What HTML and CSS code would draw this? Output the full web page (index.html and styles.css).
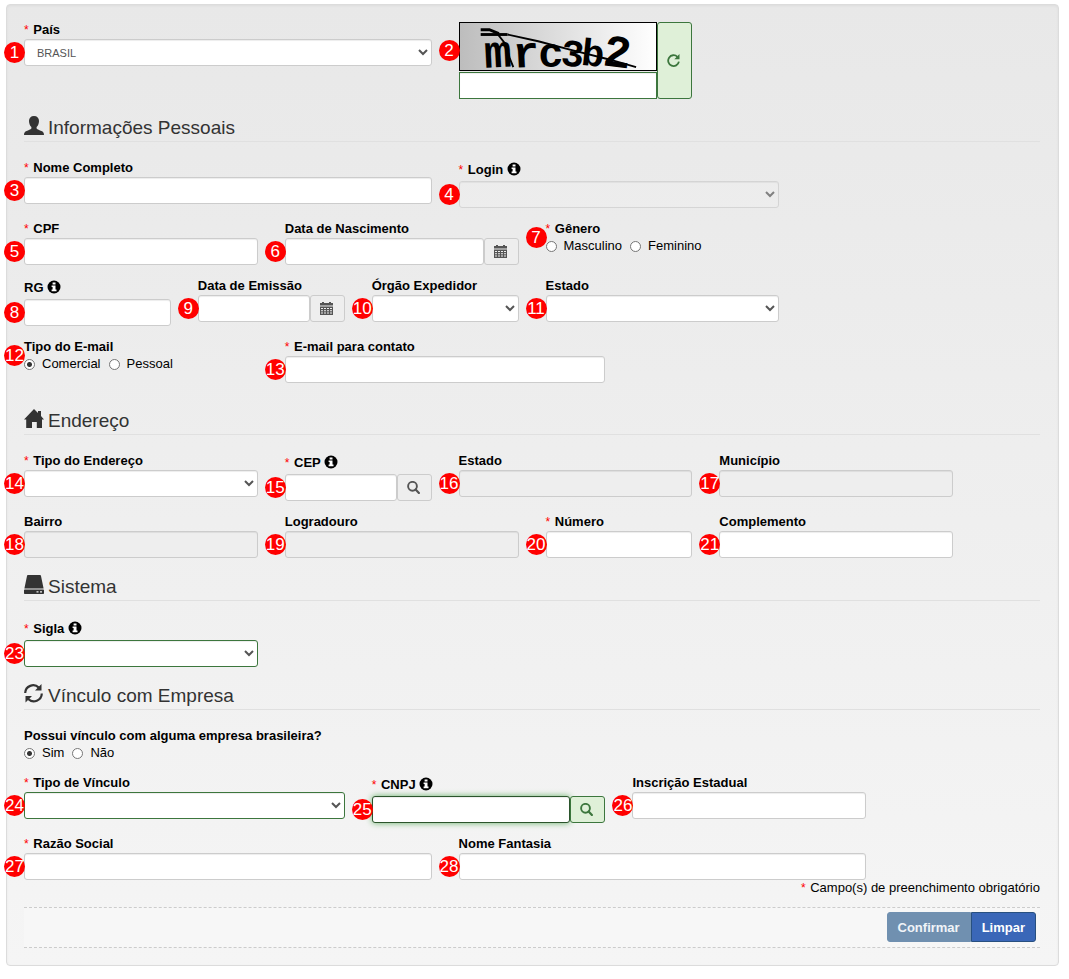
FILE: index.html
```html
<!DOCTYPE html>
<html lang="pt-BR">
  <head>
    <meta charset="UTF-8" />
    <meta name="viewport" content="width=device-width, initial-scale=1" />
    <title>Cadastro</title>
    <link rel="stylesheet" href="styles.css">
  </head>
  <body>
    <svg class="sprite" aria-hidden="true">
      <symbol id="icon-user" viewBox="0 0 20 20">
        <path d="M10 0c3.200 0 5 2 5 5 0 2.600-1 4.800-2.400 6v1.600c.8 1 3 1.700 4.800 2.500 1.800.7 2.600 1.900 2.600 3.900H0c0-2 .8-3.200 2.600-3.900 1.800-.8 4-1.500 4.800-2.500V11C6 9.800 5 7.600 5 5c0-3 1.800-5 5-5z" />
      </symbol>
      <symbol id="icon-home" viewBox="0 0 20 20">
        <path d="M10 0l4 4V2h3v5l3 3.400h-2V19h-5.200v-6H8v6H2.200v-8.600H0z" />
      </symbol>
      <symbol id="icon-hdd" viewBox="0 0 20 20">
        <path fill-rule="evenodd" d="M4.200 0h11.600c.7 0 1 .3 1.200 1l2.600 12.600H.4L3 1c.2-.7.500-1 1.200-1zM1 14.600h18c.6 0 1 .4 1 1v2.400c0 .6-.4 1-1 1H1c-.6 0-1-.4-1-1v-2.400c0-.6.400-1 1-1zm11.500 1.600v1.300h2v-1.300zm3.500 0v1.300h2v-1.300z" />
      </symbol>
      <symbol id="icon-sync" viewBox="0 0 20 20">
        <path d="M1.200 9A8 8 0 0 1 14.800 3.600M17.800 9.500A8 8 0 0 1 4.200 15" fill="none" stroke="currentColor" stroke-width="2.200" />
        <path d="M17.500 0v6.500H11zM1.500 18.500V12H8z" />
      </symbol>
      <symbol id="icon-info" viewBox="0 0 14 14">
        <circle cx="7" cy="7" r="6.500" />
        <path d="M5.600 2.400h2.900v2H5.600zM4.600 5.400h3.900v4.200h1v1.700H4.600V9.600h1V7.100h-1z" fill="#fff" />
      </symbol>
      <symbol id="icon-calendar" viewBox="0 0 13 13">
        <path fill-rule="evenodd" d="M0 1h2V0h2v1h5V0h2v1h2v2.500H0zM0 4.500h13V13H0zM1 6v1h2V6zm3 0v1h2V6zm3 0v1h2V6zm3 0v1h2V6zM1 8.300v1h2v-1zm3 0v1h2v-1zm3 0v1h2v-1zm3 0v1h2v-1zM1 10.600v1h2v-1zm3 0v1h2v-1zm3 0v1h2v-1zm3 0v1h2v-1z" />
      </symbol>
      <symbol id="icon-search" viewBox="0 0 13 13">
        <circle cx="5.500" cy="5.300" r="4.400" fill="none" stroke="currentColor" stroke-width="1.900" />
        <path d="M8.600 8.500l3.300 3.500" stroke="currentColor" stroke-width="2.200" stroke-linecap="round" />
      </symbol>
      <symbol id="icon-repeat" viewBox="0 0 13 13">
        <path d="M10.400 2.800A5.400 5.400 0 1 0 11.900 7.600" fill="none" stroke="currentColor" stroke-width="1.800" />
        <path d="M12.500 0v5.200H7.300z" />
      </symbol>
    </svg>

    <form class="well">
      <div class="row">
        <div class="field col-5">
          <label for="pais"><span class="req">*</span> País</label>
          <div class="control">
            <select id="pais"><option>BRASIL</option></select>
            <span class="badge">1</span>
          </div>
        </div>
        <div class="field col-3">
          <div class="control captcha">
            <div class="captcha-main">
              <svg class="captcha-image" viewBox="0 0 198 49" role="img" aria-label="Captcha">
                <g class="captcha-text">
                  <text x="22" y="46" font-size="48" transform="rotate(-3 36 40)">m</text>
                  <text x="52" y="46" font-size="46" transform="rotate(-3 66 40)">r</text>
                  <text x="78" y="46" font-size="44">c</text>
                  <text x="102" y="45" font-size="40" transform="rotate(6 114 32)">3</text>
                  <text x="123" y="45" font-size="40" transform="rotate(6 136 32)">b</text>
                  <text x="146" y="46" font-size="48" transform="rotate(7 160 32)">2</text>
                </g>
                <path d="M18 7h9l10 4" fill="none" stroke="#000" stroke-width="3" />
                <path d="M18 12h28" stroke="#000" stroke-width="3" />
                <path d="M46 12l32 7 34 9 40 10 28 8M36 12l8 10 4 14 4 10" fill="none" stroke="#000" stroke-width="2" />
              </svg>
              <input type="text" id="captcha" class="success" aria-label="Captcha" />
            </div>
            <button type="button" class="addon success" aria-label="Atualizar captcha">
              <svg class="icon"><use href="#icon-repeat" /></svg>
            </button>
            <span class="badge">2</span>
          </div>
        </div>
      </div>

      <h2><svg class="icon"><use href="#icon-user" /></svg> Informações Pessoais</h2>
      <div class="row">
        <div class="field col-5">
          <label for="nome"><span class="req">*</span> Nome Completo</label>
          <div class="control">
            <input type="text" id="nome" />
            <span class="badge">3</span>
          </div>
        </div>
        <div class="field col-4">
          <label for="login" class="with-info"><span class="req">*</span> Login <svg class="icon"><use href="#icon-info" /></svg></label>
          <div class="control">
            <select id="login" disabled></select>
            <span class="badge">4</span>
          </div>
        </div>
      </div>
      <div class="row">
        <div class="field col-3">
          <label for="cpf"><span class="req">*</span> CPF</label>
          <div class="control">
            <input type="text" id="cpf" />
            <span class="badge">5</span>
          </div>
        </div>
        <div class="field col-3">
          <label for="nascimento">Data de Nascimento</label>
          <div class="control">
            <input type="text" id="nascimento" />
            <button type="button" class="addon" aria-label="Calendário">
              <svg class="icon"><use href="#icon-calendar" /></svg>
            </button>
            <span class="badge">6</span>
          </div>
        </div>
        <fieldset class="field col-3">
          <legend><span class="req">*</span> Gênero</legend>
          <div class="control radios">
            <label><input type="radio" name="genero" /> Masculino</label>
            <label><input type="radio" name="genero" /> Feminino</label>
            <span class="badge">7</span>
          </div>
        </fieldset>
      </div>
      <div class="row">
        <div class="field col-2">
          <label for="rg" class="with-info">RG <svg class="icon"><use href="#icon-info" /></svg></label>
          <div class="control">
            <input type="text" id="rg" />
            <span class="badge">8</span>
          </div>
        </div>
        <div class="field col-2">
          <label for="emissao">Data de Emissão</label>
          <div class="control">
            <input type="text" id="emissao" />
            <button type="button" class="addon" aria-label="Calendário">
              <svg class="icon"><use href="#icon-calendar" /></svg>
            </button>
            <span class="badge">9</span>
          </div>
        </div>
        <div class="field col-2">
          <label for="orgao">Órgão Expedidor</label>
          <div class="control">
            <select id="orgao"></select>
            <span class="badge">10</span>
          </div>
        </div>
        <div class="field col-3">
          <label for="estadoRg">Estado</label>
          <div class="control">
            <select id="estadoRg"></select>
            <span class="badge">11</span>
          </div>
        </div>
      </div>
      <div class="row row-last">
        <fieldset class="field col-3">
          <legend>Tipo do E-mail</legend>
          <div class="control radios">
            <label><input type="radio" name="tipoEmail" checked /> Comercial</label>
            <label><input type="radio" name="tipoEmail" /> Pessoal</label>
            <span class="badge">12</span>
          </div>
        </fieldset>
        <div class="field col-4">
          <label for="email"><span class="req">*</span> E-mail para contato</label>
          <div class="control">
            <input type="email" id="email" />
            <span class="badge">13</span>
          </div>
        </div>
      </div>

      <h2><svg class="icon"><use href="#icon-home" /></svg> Endereço</h2>
      <div class="row">
        <div class="field col-3">
          <label for="tipoEndereco"><span class="req">*</span> Tipo do Endereço</label>
          <div class="control">
            <select id="tipoEndereco"></select>
            <span class="badge">14</span>
          </div>
        </div>
        <div class="field col-2">
          <label for="cep" class="with-info"><span class="req">*</span> CEP <svg class="icon"><use href="#icon-info" /></svg></label>
          <div class="control">
            <input type="text" id="cep" />
            <button type="button" class="addon" aria-label="Buscar CEP">
              <svg class="icon"><use href="#icon-search" /></svg>
            </button>
            <span class="badge">15</span>
          </div>
        </div>
        <div class="field col-3">
          <label for="estado">Estado</label>
          <div class="control">
            <input type="text" id="estado" disabled />
            <span class="badge">16</span>
          </div>
        </div>
        <div class="field col-3">
          <label for="municipio">Município</label>
          <div class="control">
            <input type="text" id="municipio" disabled />
            <span class="badge">17</span>
          </div>
        </div>
      </div>
      <div class="row">
        <div class="field col-3">
          <label for="bairro">Bairro</label>
          <div class="control">
            <input type="text" id="bairro" disabled />
            <span class="badge">18</span>
          </div>
        </div>
        <div class="field col-3">
          <label for="logradouro">Logradouro</label>
          <div class="control">
            <input type="text" id="logradouro" disabled />
            <span class="badge">19</span>
          </div>
        </div>
        <div class="field col-2">
          <label for="numero"><span class="req">*</span> Número</label>
          <div class="control">
            <input type="text" id="numero" />
            <span class="badge">20</span>
          </div>
        </div>
        <div class="field col-3">
          <label for="complemento">Complemento</label>
          <div class="control">
            <input type="text" id="complemento" />
            <span class="badge">21</span>
          </div>
        </div>
      </div>

      <h2><svg class="icon"><use href="#icon-hdd" /></svg> Sistema</h2>
      <div class="row">
        <div class="field col-3">
          <label for="sigla" class="with-info"><span class="req">*</span> Sigla <svg class="icon"><use href="#icon-info" /></svg></label>
          <div class="control">
            <select id="sigla" class="success"></select>
            <span class="badge">23</span>
          </div>
        </div>
      </div>

      <h2><svg class="icon"><use href="#icon-sync" /></svg> Vínculo com Empresa</h2>
      <div class="row">
        <fieldset class="field col-5">
          <legend>Possui vínculo com alguma empresa brasileira?</legend>
          <div class="control radios">
            <label><input type="radio" name="vinculo" checked /> Sim</label>
            <label><input type="radio" name="vinculo" /> Não</label>
          </div>
        </fieldset>
      </div>
      <div class="row">
        <div class="field col-4">
          <label for="tipoVinculo"><span class="req">*</span> Tipo de Vínculo</label>
          <div class="control">
            <select id="tipoVinculo" class="success"></select>
            <span class="badge">24</span>
          </div>
        </div>
        <div class="field col-3">
          <label for="cnpj" class="with-info"><span class="req">*</span> CNPJ <svg class="icon"><use href="#icon-info" /></svg></label>
          <div class="control">
            <input type="text" id="cnpj" class="success active" />
            <button type="button" class="addon success" aria-label="Buscar CNPJ">
              <svg class="icon"><use href="#icon-search" /></svg>
            </button>
            <span class="badge">25</span>
          </div>
        </div>
        <div class="field col-3">
          <label for="inscricao">Inscrição Estadual</label>
          <div class="control">
            <input type="text" id="inscricao" />
            <span class="badge">26</span>
          </div>
        </div>
      </div>
      <div class="row row-end">
        <div class="field col-5">
          <label for="razao"><span class="req">*</span> Razão Social</label>
          <div class="control">
            <input type="text" id="razao" />
            <span class="badge">27</span>
          </div>
        </div>
        <div class="field col-5">
          <label for="fantasia">Nome Fantasia</label>
          <div class="control">
            <input type="text" id="fantasia" />
            <span class="badge">28</span>
          </div>
        </div>
      </div>

      <p class="note"><span class="req">*</span> Campo(s) de preenchimento obrigatório</p>
      <div class="actions">
        <button type="submit" class="btn" disabled>Confirmar</button>
        <button type="reset" class="btn">Limpar</button>
      </div>
    </form>
  </body>
</html>
```
FILE: styles.css
```css
* {
  box-sizing: border-box;
}
body {
  margin: 0;
  padding: 4px 10px 14px 6px;
  background: #fff;
  color: #000;
  font-family: "Liberation Sans", Arial, sans-serif;
  font-size: 13px;
  line-height: 15px;
}
.sprite {
  display: none;
}
.icon {
  width: 13px;
  height: 13px;
  fill: currentColor;
}
.well {
  padding: 17px 18px 17px 17px;
  border: 1px solid #dcdcdc;
  border-radius: 4px;
  background: linear-gradient(#e8e8e8, #f5f5f5);
  box-shadow: inset 0 1px 3px rgba(0, 0, 0, 0.05);
}

/* headings */
h2 {
  display: flex;
  align-items: flex-start;
  gap: 4px;
  margin: 0 0 18px;
  padding-top: 3px;
  border-bottom: 1px solid #e0e0e0;
  color: #333;
  font-size: 19px;
  font-weight: normal;
  line-height: 26px;
}
h2 .icon {
  width: 20px;
  height: 20px;
  margin-top: 1px;
}

/* grid */
.row {
  display: grid;
  grid-template-columns: repeat(12, 1fr);
  column-gap: 27px;
  align-items: start;
  margin-bottom: 13px;
}
.row-last {
  margin-bottom: 22px;
}
.row-end {
  margin-bottom: 0;
}
.col-2 {
  grid-column: span 2;
}
.col-3 {
  grid-column: span 3;
}
.col-4 {
  grid-column: span 4;
}
.col-5 {
  grid-column: span 5;
}

/* fields */
.field {
  min-width: 0;
  margin: 0;
  padding: 0;
  border: 0;
}
.field > label,
legend {
  display: block;
  height: 17px;
  padding: 0;
  font-weight: bold;
  white-space: nowrap;
}
.field > .with-info {
  height: 21px;
  line-height: 20px;
}
.with-info .icon {
  width: 14px;
  height: 14px;
  vertical-align: -2px;
}
.req {
  margin-right: 1px;
  color: #f00;
  font-size: 12px;
  font-weight: normal;
}
.control {
  position: relative;
  display: flex;
}
input,
select {
  flex: 1;
  width: 100%;
  min-width: 0;
  height: 27px;
  margin: 0;
  padding: 0 8px;
  border: 1px solid #ccc;
  border-radius: 3px;
  background-color: #fff;
  box-shadow: inset 0 1px 1px rgba(0, 0, 0, 0.075);
  color: #555;
  font-family: inherit;
  font-size: 11px;
}
input:disabled,
select:disabled {
  background-color: #eee;
}
.addon {
  display: flex;
  align-items: center;
  justify-content: center;
  width: 35px;
  padding: 0 2px 0 0;
  border: 1px solid #ccc;
  border-radius: 3px;
  background: #eee;
  color: #555;
}
.success {
  border-color: #3c763d;
}
.addon.success {
  background: #dff0d8;
  color: #3c763d;
}
.active {
  border-color: #2b542c;
  box-shadow: inset 0 1px 1px rgba(0, 0, 0, 0.075), 0 0 6px #67b168;
}

/* radio buttons */
.radios {
  gap: 8px;
  height: 17px;
}
.radios label {
  display: flex;
  align-items: flex-start;
  gap: 7px;
}
.radios input {
  appearance: none;
  flex: none;
  width: 11px;
  height: 11px;
  margin-top: 3px;
  padding: 0;
  border-color: #767676;
  border-radius: 50%;
  box-shadow: none;
}
.radios input:checked {
  background: radial-gradient(circle, #333 2px, #fff 3px);
}

/* captcha */
.captcha-main {
  display: flex;
  flex: 1;
  flex-direction: column;
  gap: 1px;
}
.captcha-image {
  width: 100%;
  height: 49px;
  border: 1px solid #000;
  background: linear-gradient(to right, #bdbdbd, #fff);
  overflow: visible;
}
.captcha-text {
  font-family: "Liberation Mono", "Courier New", monospace;
  font-weight: bold;
}
.captcha input {
  flex: none;
  border-radius: 0;
}

/* numbered markers */
.badge {
  position: absolute;
  top: 3px;
  left: -20px;
  width: 21px;
  height: 21px;
  border-radius: 50%;
  background: #f00;
  color: #fff;
  font-size: 17px;
  line-height: 21px;
  text-align: center;
}
.radios .badge {
  top: -11px;
}
.captcha .badge {
  top: 18px;
}

/* footer */
.note {
  margin: 0;
  padding-bottom: 11px;
  text-align: right;
}
.actions {
  display: flex;
  justify-content: flex-end;
  padding: 4px 4px 5px;
  border-top: 1px dashed #ccc;
  border-bottom: 1px dashed #ccc;
  background: #f7f7f7;
}
.btn {
  height: 30px;
  padding: 0 10px;
  border: 1px solid #285080;
  border-radius: 0 3px 3px 0;
  background: #3a67b8;
  color: #fff;
  font-family: inherit;
  font-size: 13px;
  font-weight: bold;
}
.btn:disabled {
  border-color: #7090b0;
  border-radius: 3px 0 0 3px;
  background: #7090b0;
  color: #f0f4f8;
}
```
